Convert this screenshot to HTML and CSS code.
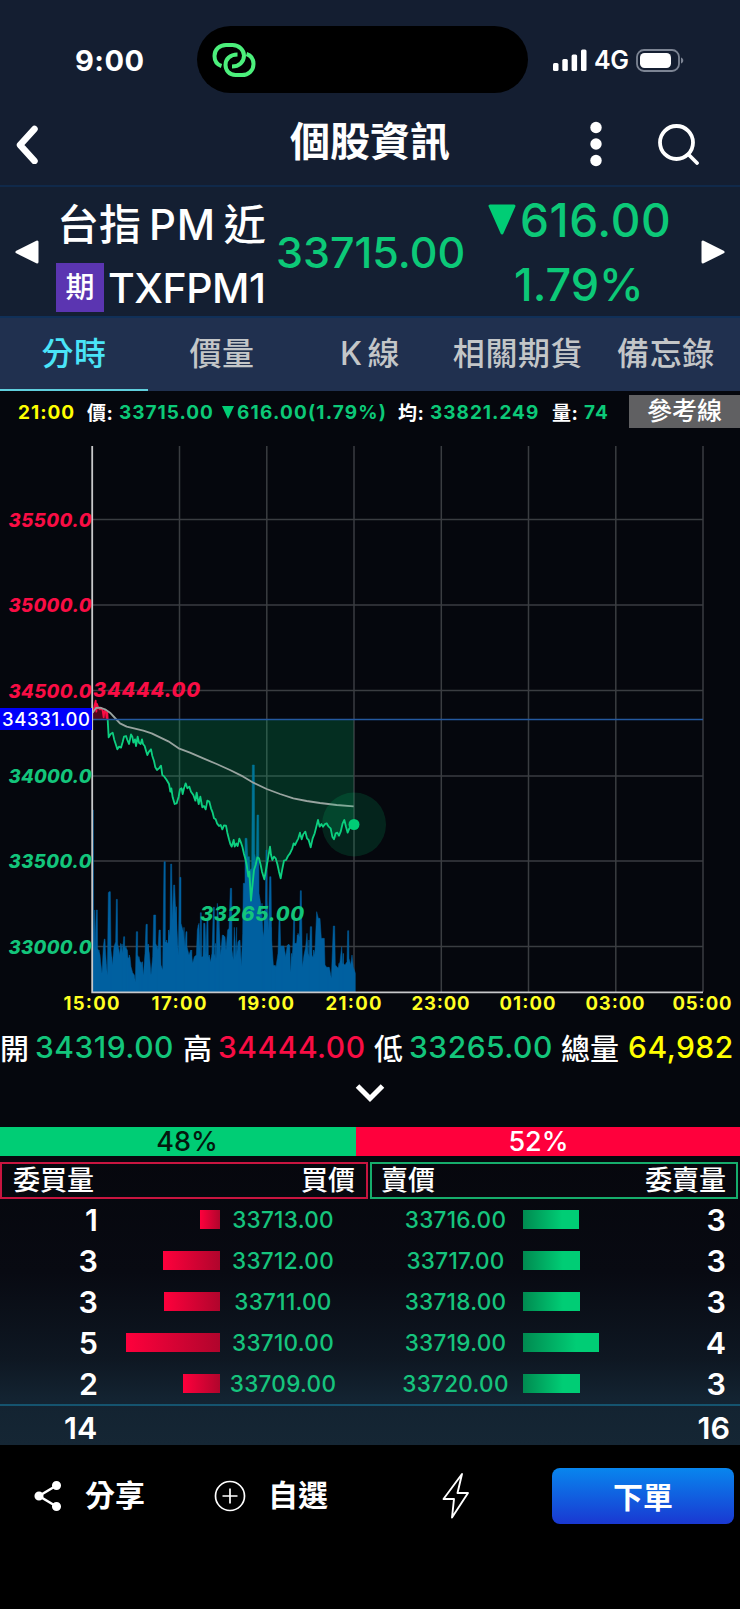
FILE: index.html
```html
<!DOCTYPE html>
<html lang="zh-Hant">
<head>
	<meta charset="UTF-8">
	<title>個股資訊</title>
	<link rel="stylesheet" href="styles.css">
</head>
<body>
	<section class="status">
		<span class="clock">9:00</span>
		<div class="island">
			<svg width="44" height="36" viewBox="0 0 44 36" fill="none" stroke="#4cf07c" stroke-width="4">
				<path d="M9.500 24C5 22.500 2.500 18.500 2.500 14C2.500 7.500 7.500 3 14 3H20.500C27 3 32 8 32 13.500C32 20 27 24.500 20 24.500"/>
				<path d="M34.500 12C39 13.500 41.500 17.500 41.500 22C41.500 28.500 36.500 33 30 33H23.500C17 33 13.500 28 13.500 23C13.500 17 18 12.500 25.500 12.500"/>
			</svg>
		</div>
		<div class="signal">
			<svg width="34" height="23" viewBox="0 0 34 23" fill="#fff">
				<rect x="0" y="14" width="5.500" height="8" rx="1.500"/>
				<rect x="9.300" y="10" width="5.500" height="12" rx="1.500"/>
				<rect x="18.600" y="5.500" width="5.500" height="16.500" rx="1.500"/>
				<rect x="28" y="0.500" width="5.500" height="21.500" rx="1.500"/>
			</svg>
			<span class="network">4G</span>
			<svg width="48" height="23" viewBox="0 0 48 23">
				<rect x="1" y="1" width="42" height="21" rx="7" fill="none" stroke="#7d8594" stroke-width="1.800"/>
				<rect x="4" y="4" width="31" height="15" rx="4.500" fill="#fff"/>
				<path d="M45 8.500c3 1 3 5 0 6z" fill="#7d8594"/>
			</svg>
		</div>
	</section>

	<header class="topbar">
		<svg class="back" width="25" height="40" viewBox="0 0 25 40" fill="none" stroke="#fff" stroke-width="6.500" stroke-linecap="round" stroke-linejoin="round">
			<path d="M19.500 5L5 21L19.500 37"/>
		</svg>
		<h1>個股資訊</h1>
		<svg class="more" width="12" height="46" viewBox="0 0 12 46" fill="#fff">
			<circle cx="6" cy="6.500" r="5.700"/>
			<circle cx="6" cy="23" r="5.700"/>
			<circle cx="6" cy="39.500" r="5.700"/>
		</svg>
		<svg class="search" width="42" height="42" viewBox="0 0 42 42" fill="none" stroke="#fff" stroke-width="3.800" stroke-linecap="round">
			<circle cx="18.500" cy="19.500" r="16.500"/>
			<path d="M31 32L39 40"/>
		</svg>
	</header>

	<section class="quote">
		<svg class="prev" width="24" height="24" viewBox="0 0 24 24" fill="#fff" stroke="#fff" stroke-width="3" stroke-linejoin="round">
			<path d="M2 12L22 2V22Z"/>
		</svg>
		<div class="stock">
			<p class="name"><span>台指</span><span class="pm">PM</span><span>近</span></p>
			<p class="code"><span class="badge">期</span><span class="symbol">TXFPM1</span></p>
		</div>
		<p class="last">33715.00</p>
		<div class="change">
			<p class="diff"><svg width="28" height="31" viewBox="0 0 28 31" fill="#00cd75" stroke="#00cd75" stroke-width="3" stroke-linejoin="round"><path d="M2 2H26L14 29Z"/></svg><span>616.00</span></p>
			<p class="percent">1.79%</p>
		</div>
		<svg class="next" width="24" height="24" viewBox="0 0 24 24" fill="#fff" stroke="#fff" stroke-width="3" stroke-linejoin="round">
			<path d="M22 12L2 2V22Z"/>
		</svg>
	</section>

	<nav class="tabs">
		<a class="active">分時</a>
		<a>價量</a>
		<a>K<i></i>線</a>
		<a>相關期貨</a>
		<a>備忘錄</a>
	</nav>

	<section class="info">
		<span class="time">21:00</span>
		<span class="label">價:</span>
		<span class="price">33715.00</span>
		<svg width="12" height="13" viewBox="0 0 12 13" fill="#00cd75"><path d="M0 0H12L6 13Z"/></svg>
		<span class="price-diff">616.00(1.79%)</span>
		<span class="label">均:</span>
		<span class="average">33821.249</span>
		<span class="label">量:</span>
		<span>74</span>
		<button>參考線</button>
	</section>

	<svg class="chart" width="740" height="588" viewBox="0 0 740 588">
		<!-- grid -->
		<path class="grid" d="M179.500 16V562M266.800 16V562M354 16V562M441.300 16V562M528.500 16V562M615.800 16V562M703 16V562M92 89.500H703M92 175H703M92 260.500H703M92 346H703M92 431H703M92 516.500H703"/>

		<!-- traded volume -->
		<g transform="translate(80 410) scale(.33333)">
			<path class="volume" d="M37 456V-90H40L41 280L44 210L45 325L49 210H52L53 325L60 345L63 375L66 400L70 320L73 297H75L76 325L79 370L82 405L85 158L87 155H91L93 330L97 375L102 320L107 305L109 178H112L113 312L117 330L119 345L122 310L128 340L131 290H134V320L142 330L144 355L150 350L153 380L158 398L163 405L166 425L169 275H173V345L180 365L185 368L190 405L195 340L198 253H202V310L208 340L213 405L218 350L221 225H227V310L234 330L237 270H241L243 375L248 390L252 65H256V305L264 310L270 265L272 72H275L277 240L281 135H284L286 190L290 250L295 345L299 112H303V250L310 275L315 320L318 275H321V320L327 345L332 330L338 370L343 350L349 345L352 270L357 250L361 350V218H364L365 350H369L371 250H375L378 345L381 235H384L385 345L391 365L396 340L400 202H403V340L408 360L412 190L418 280L422 345L427 285L435 290L438 330L443 270L447 265L451 145H455L456 330L460 360L463 262L468 350L470 262V345L474 305L480 300L484 378L488 280L490 130H495V-5H501L503 50H508L510 90L515 85L517 -225H523L524 40L529 70L531 -75H536L537 160L542 190L548 270L551 290L556 210L558 30H561V180L565 270L569 110H573L575 300L580 375L588 380L594 340L597 240H600L602 318H612L617 350L622 315H629L632 395L638 330L641 240H644V310H650L654 280L658 290L661 152H664L667 380L672 345L677 320L681 280L684 340L688 350L691 260H695L696 345L700 355L705 330L710 215L715 235H720L724 295H733L735 375L740 382H748L754 415L760 258H764L766 375L775 385L780 365L785 320L788 370L795 375L801 365L803 272H806L807 355L812 375L816 345L820 380L826 400V456Z"/>
			<path class="trades" d="M57 456V330M94 456V350M126 456V312M138 456V318M148 456V345M177 456V350M187 456V365M205 456V312M231 456V318M260 456V300M266 456V270M289 456V200M312 456V262M335 456V330M355 456V255M388 456V345M406 456V310M417 456V240M430 456V285M478 456V300M546 456V190M553 456V210M573 456V262M585 456V375M607 456V318M626 456V312M635 456V340M652 456V285M674 456V345M687 456V300M701 456V330M717 456V238M728 456V297M745 456V382M777 456V370M790 456V340"/>
		</g>

		<!-- price and average -->
		<g transform="translate(80 250) scale(.33333)">
			<path class="up-area" d="M38 118V98L43 80L47 62L51 72L55 84L60 88L64 84L68 92L71 112L73 98L77 96L80 114L83 118Z"/>
			<path class="up" d="M38 98L40 92L43 80L47 62L49 95L51 72L55 84L60 88L64 84L68 92L71 112L73 94L77 90L80 114L82 98L83 118"/>
			<path class="down-area" d="M83 118L86 172L98 158L112 208L123 203L132 170L142 180L147 192L153 163L160 188L168 198L177 188L189 192L202 225L213 208L222 243L231 270L243 257L253 290L267 312L278 352L284 372L290 370L300 328L317 310L333 335L346 362L367 382L382 362L393 385L402 415L417 438L438 437L447 478L455 500L478 476L487 500L500 555L505 590L513 662L522 570L532 532L542 555L553 598L563 542L568 500L576 540L587 535L602 595L612 542L637 505L650 480L660 458L676 455L692 502L704 460L714 420L724 432L746 440L762 478L777 467L793 420L803 458L821 433V118Z"/>
			<path class="down" d="M83 118L86 172L92 162L98 158L103 180L108 195L112 208L117 200L123 203L128 186L132 170L138 168L142 180L147 192L150 178L153 163L157 170L160 188L165 178L168 198L173 170L177 188L182 192L186 178L189 192L194 198L198 212L202 225L207 215L213 208L217 228L222 243L226 262L231 270L237 265L243 257L247 285L253 290L260 300L267 312L271 335L274 325L278 352L284 372L290 370L296 350L300 328L305 325L308 342L312 325L317 310L322 325L328 320L333 335L340 345L346 362L350 338L356 372L361 350L367 382L372 378L377 388L382 362L388 365L393 385L398 398L402 415L407 418L411 430L417 438L422 435L427 448L432 436L438 437L442 458L447 478L451 492L455 500L461 480L464 500L469 490L473 498L478 476L483 488L487 500L492 522L497 540L500 555L505 590L508 575L513 662L518 610L522 570L527 555L532 532L537 535L542 555L546 575L553 598L558 570L563 542L570 500L573 525L577 540L582 530L587 535L592 552L597 575L602 595L606 572L612 542L618 540L624 528L630 520L637 505L641 490L645 495L650 485L655 475L660 458L665 478L670 462L676 455L681 475L686 480L692 502L698 475L704 460L709 440L714 420L719 440L724 432L729 440L735 432L740 430L746 440L752 445L757 470L762 478L767 460L772 458L777 467L782 455L788 430L793 420L798 440L803 458L808 445L814 440L821 433"/>
			<path class="mean" d="M38 98L48 84L60 83L75 88L90 98L105 114L120 130L140 140L165 146L190 152L215 160L240 172L265 184L298 206L330 218L370 235L410 252L450 270L490 290L520 308L560 327L600 342L640 355L680 363L720 369L770 375L821 379"/>
		</g>
		<circle cx="354" cy="394.500" r="32" fill="#00cd75" fill-opacity=".15"/>
		<circle cx="354" cy="394.500" r="5.500" fill="#00cd75"/>

		<!-- axes -->
		<path class="reference" d="M92 289.500H703"/>
		<path class="axis" d="M92.200 16V562.300H703"/>

		<g class="scale rise">
			<text x="8.500" y="96.500" textLength="83">35500.0</text>
			<text x="8.500" y="182" textLength="83">35000.0</text>
			<text x="8.500" y="267.500" textLength="83">34500.0</text>
		</g>
		<g class="scale fall">
			<text x="8.500" y="353" textLength="83">34000.0</text>
			<text x="8.500" y="438" textLength="83">33500.0</text>
			<text x="8.500" y="523.500" textLength="83">33000.0</text>
		</g>
		<rect x="0" y="278" width="92" height="22" fill="#0000fa"/>
		<text class="base" x="2" y="296" textLength="88">34331.00</text>
		<text class="peak rise" x="93" y="267" textLength="107">34444.00</text>
		<text class="peak fall" x="200" y="491" textLength="104">33265.00</text>

		<g class="hours">
			<text x="63.500" y="580" textLength="56">15:00</text>
			<text x="151.500" y="580" textLength="55">17:00</text>
			<text x="238" y="580" textLength="56">19:00</text>
			<text x="325.500" y="580" textLength="56">21:00</text>
			<text x="411.500" y="580" textLength="58">23:00</text>
			<text x="499.500" y="580" textLength="56">01:00</text>
			<text x="585.500" y="580" textLength="59">03:00</text>
			<text x="672.500" y="580" textLength="59">05:00</text>
		</g>
	</svg>

	<section class="summary">
		<span>開</span><b class="open fall">34319.00</b>
		<span>高</span><b class="high rise">34444.00</b>
		<span>低</span><b class="low fall">33265.00</b>
		<span>總量</span><b class="total">64,982</b>
	</section>

	<div class="expand">
		<svg width="30" height="20" viewBox="0 0 30 20" fill="none" stroke="#fff" stroke-width="5">
			<path d="M2.500 3L15 15.500L27.500 3"/>
		</svg>
	</div>

	<div class="ratio">
		<div class="buyers" style="width: 356px"><span>48%</span></div>
		<div class="sellers"><span>52%</span></div>
	</div>

	<section class="book">
		<div class="heads">
			<div class="head bid"><span>委買量</span><span>買價</span></div>
			<div class="head ask"><span>賣價</span><span>委賣量</span></div>
		</div>
		<div class="row">
			<b>1</b><div class="bar buy"><i style="width: 20px"></i></div><span>33713.00</span>
			<span>33716.00</span><div class="bar sell"><i style="width: 56px"></i></div><b>3</b>
		</div>
		<div class="row">
			<b>3</b><div class="bar buy"><i style="width: 57px"></i></div><span>33712.00</span>
			<span>33717.00</span><div class="bar sell"><i style="width: 57px"></i></div><b>3</b>
		</div>
		<div class="row">
			<b>3</b><div class="bar buy"><i style="width: 56px"></i></div><span>33711.00</span>
			<span>33718.00</span><div class="bar sell"><i style="width: 57px"></i></div><b>3</b>
		</div>
		<div class="row">
			<b>5</b><div class="bar buy"><i style="width: 94px"></i></div><span>33710.00</span>
			<span>33719.00</span><div class="bar sell"><i style="width: 76px"></i></div><b>4</b>
		</div>
		<div class="row">
			<b>2</b><div class="bar buy"><i style="width: 37px"></i></div><span>33709.00</span>
			<span>33720.00</span><div class="bar sell"><i style="width: 57px"></i></div><b>3</b>
		</div>
		<div class="sum"><b>14</b><b>16</b></div>
	</section>

	<footer class="actions">
		<a class="share">
			<svg width="28" height="32" viewBox="0 0 28 32" fill="#fff" stroke="#fff" stroke-width="2.500">
				<path d="M22.500 5.500L5 16L22.500 26.500" fill="none"/>
				<circle cx="22.500" cy="5.500" r="3.300"/>
				<circle cx="5" cy="16" r="3.300"/>
				<circle cx="22.500" cy="26.500" r="3.300"/>
			</svg>
			<span>分享</span>
		</a>
		<a class="favorite">
			<svg width="32" height="32" viewBox="0 0 32 32" fill="none" stroke="#fff" stroke-width="1.700">
				<circle cx="16" cy="16" r="14.500"/>
				<path d="M8.500 16H23.500M16 8.500V23.500"/>
			</svg>
			<span>自選</span>
		</a>
		<a class="flash">
			<svg width="28" height="48" viewBox="0 0 28 48" fill="none" stroke="#fff" stroke-width="1.900" stroke-linejoin="round">
				<path d="M20 2L1.500 27H12L10 45.500L26 21H15.500Z"/>
			</svg>
		</a>
		<button class="order">下單</button>
	</footer>
</body>
</html>
```
FILE: styles.css
```css
* {
	box-sizing: border-box;
}

body {
	margin: 0;
	width: 740px;
	height: 1609px;
	overflow: hidden;
	background-color: #05070d;
	color: white;
	font-family: Inter, "Noto Sans CJK TC", sans-serif;
	font-weight: 500;
}

p, h1 {
	margin: 0;
}

svg {
	display: block;
	flex-shrink: 0;
}

button {
	border: 0;
	padding: 0;
	color: white;
	font-family: inherit;
	font-weight: 500;
}

.rise {
	color: #f90d44;
	fill: #f90d44;
}

.fall {
	color: #13c57b;
	fill: #13c57b;
}

/* status bar */
.status {
	display: flex;
	align-items: center;
	height: 120px;
	background-color: #141e31;
}

.clock {
	width: 197px;
	padding-left: 75px;
	font-size: 29px;
	font-weight: 700;
	letter-spacing: .5px;
}

.island {
	display: flex;
	align-items: center;
	width: 331px;
	height: 67px;
	margin-bottom: 1px;
	padding-left: 15px;
	border-radius: 34px;
	background-color: black;
}

.signal {
	display: flex;
	align-items: center;
	padding-left: 25px;
}

.network {
	width: 49px;
	padding-left: 7px;
	font-size: 25px;
	font-weight: 600;
	letter-spacing: -.5px;
}

/* title bar */
.topbar {
	display: flex;
	align-items: center;
	height: 67px;
	padding: 0 40px 18px 15px;
	border-bottom: 2px solid #10294a;
	background-color: #141e31;
}

.topbar h1 {
	width: 429px;
	margin: 0 0 4px 121px;
	padding-left: 129px;
	font-size: 40px;
	font-weight: 700;
	line-height: 42px;
}

.search {
	margin-left: auto;
}

/* quote */
.quote {
	display: flex;
	align-items: center;
	height: 131px;
	padding: 0 15px;
	border-bottom: 2px solid #103058;
	background-color: #141f32;
}

.stock {
	flex-shrink: 0;
	width: 222px;
	padding: 8px 0 0 17px;
}

.name {
	display: flex;
	height: 64px;
	padding-left: 1px;
	font-size: 42px;
	line-height: 64px;
	white-space: nowrap;
}

.pm {
	margin: 0 8px;
	letter-spacing: .7px;
}

.code {
	display: flex;
	align-items: center;
	height: 62px;
}

.badge {
	flex-shrink: 0;
	width: 48px;
	height: 49px;
	background-color: #5b35b1;
	font-size: 29px;
	line-height: 49px;
	text-align: center;
}

.symbol {
	padding-left: 4px;
	font-size: 41px;
	letter-spacing: -.5px;
}

.last, .change {
	color: #0cc978;
}

.last {
	flex-shrink: 0;
	width: 205px;
	padding-left: 15px;
	font-size: 43px;
	line-height: 50px;
}

.change {
	width: 210px;
	padding-left: 22px;
}

.diff {
	display: flex;
	align-items: center;
	height: 64px;
	font-size: 46px;
	letter-spacing: .6px;
}

.diff span {
	padding-left: 4px;
}

.percent {
	height: 64px;
	padding-left: 26px;
	font-size: 45px;
	line-height: 66px;
}

.next {
	margin-left: auto;
}

/* tabs */
.tabs {
	display: flex;
	height: 73px;
	background-color: #20304f;
	color: #c3c6c8;
	font-size: 32px;
	letter-spacing: .6px;
	line-height: 72px;
}

.tabs a {
	flex: 1;
	text-align: center;
	white-space: nowrap;
}

.tabs i {
	display: inline-block;
	width: 5px;
}

.tabs .active {
	border-bottom: 2px solid #60cfdd;
	color: #4ae4f8;
}

/* info line */
.info {
	display: flex;
	align-items: center;
	height: 39px;
	padding: 4px 0 0 18px;
	color: #0cc978;
	font-size: 19px;
	font-weight: 700;
	letter-spacing: 1px;
	white-space: nowrap;
}

.time {
	width: 69px;
	color: #ff0;
}

.label {
	width: 32px;
	padding-bottom: 2px;
	color: white;
	letter-spacing: .5px;
}

.price {
	width: 103px;
}

.price-diff {
	width: 164px;
	padding-left: 3px;
	letter-spacing: 1.200px;
}

.average {
	width: 122px;
}

.info button {
	width: 111px;
	height: 33px;
	margin: 0 0 2px auto;
	background-color: #606062;
	font-size: 25px;
	line-height: 33px;
}

/* chart */
.chart text {
	font-size: 18.500px;
}

.grid {
	fill: none;
	stroke: #3a3d41;
	stroke-width: 1.500;
}

.axis {
	fill: none;
	stroke: #c8c8ca;
	stroke-width: 1.800;
}

.reference {
	stroke: #24599f;
	stroke-width: 1.500;
}

.volume {
	fill: #0060a0;
	stroke: #0060a0;
	stroke-width: 1.500;
}

.trades {
	stroke: #0060a0;
	stroke-width: 3;
}

.up, .down, .mean {
	fill: none;
	stroke-width: 5.500;
	stroke-linejoin: round;
}

.up {
	stroke: #f90d44;
}

.down {
	stroke: #0dcf80;
}

.mean {
	stroke: #98a39f;
}

.up-area {
	fill: #f90d44;
	fill-opacity: .3;
}

.down-area {
	fill: #00cd75;
	fill-opacity: .2;
}

.scale {
	font-style: italic;
	font-weight: 800;
}

.chart .peak {
	font-size: 20px;
	font-style: italic;
	font-weight: 800;
}

.base {
	fill: white;
}

.hours {
	fill: #ff2;
	font-weight: 700;
}

/* open, high, low, total */
.summary {
	display: flex;
	align-items: center;
	height: 61px;
	padding-bottom: 3px;
	font-size: 29px;
	white-space: nowrap;
}

.summary b {
	padding-left: 6px;
	font-size: 30px;
	font-weight: 500;
	letter-spacing: .5px;
}

.open {
	width: 154px;
}

.high {
	width: 162px;
}

.low {
	width: 158px;
}

.summary .total {
	padding-left: 9px;
	color: #ff0;
}

.expand {
	display: flex;
	justify-content: center;
	height: 48px;
	padding-top: 4px;
}

/* buy / sell ratio */
.ratio {
	display: flex;
	height: 29px;
	font-size: 27px;
	line-height: 29px;
	text-align: center;
}

.buyers {
	padding-left: 18px;
	background-color: #00cd75;
	color: #04180e;
}

.sellers {
	flex: 1;
	padding-right: 19px;
	background-color: #ff003c;
}

/* order book */
.book {
	height: 289px;
	padding-top: 6px;
	background: linear-gradient(#06070d, #080a12 40%, #0e1722 70%, #132331 84%, #152634);
}

.heads {
	display: flex;
	gap: 2px;
	height: 37px;
}

.head {
	display: flex;
	justify-content: space-between;
	width: 368px;
	padding: 0 11px;
	font-size: 27px;
	line-height: 34px;
}

.bid {
	border: 2px solid #c81540;
}

.ask {
	padding: 0 10px 0 9px;
	border: 2px solid #16ad6c;
}

.row {
	display: grid;
	grid-template-columns: 98px 122px 126px 50px 119px 8px 90px 113px;
	align-items: center;
	height: 41px;
	color: #16c47d;
	font-size: 22.500px;
	text-align: center;
}

.row > :nth-child(4) {
	grid-column: 5;
}

.row > :nth-child(5) {
	grid-column: 7;
}

.row > :nth-child(6) {
	grid-column: 8;
}

.row span {
	letter-spacing: .3px;
}

.row b, .sum b {
	color: white;
	font-size: 30.500px;
	font-weight: 600;
	text-align: right;
}

.bar {
	display: flex;
	height: 19px;
}

.buy {
	justify-content: flex-end;
}

.buy i {
	background: linear-gradient(to right, #ff003c, #b0052c);
}

.sell i {
	background: linear-gradient(to right, #008a50, #00cd75 70%);
}

.sum {
	display: flex;
	justify-content: space-between;
	height: 41px;
	border-top: 2px solid #15546f;
	padding: 0 10px 0 64px;
	line-height: 43px;
}

/* bottom bar */
.actions {
	display: flex;
	height: 164px;
	padding: 23px 6px 0 34px;
	background-color: black;
	font-size: 30px;
	font-weight: 700;
	line-height: 54px;
}

.actions a {
	display: flex;
	align-items: center;
	height: 56px;
}

.actions span {
	height: 56px;
}

.share {
	width: 180px;
	gap: 23px;
}

.favorite {
	width: 228px;
	gap: 22px;
}

.order {
	width: 182px;
	height: 56px;
	margin-left: auto;
	padding-bottom: 2px;
	border-radius: 8px;
	background: linear-gradient(#0886ee, #1a38d2);
	font-size: 30px;
	font-weight: 700;
}
```
